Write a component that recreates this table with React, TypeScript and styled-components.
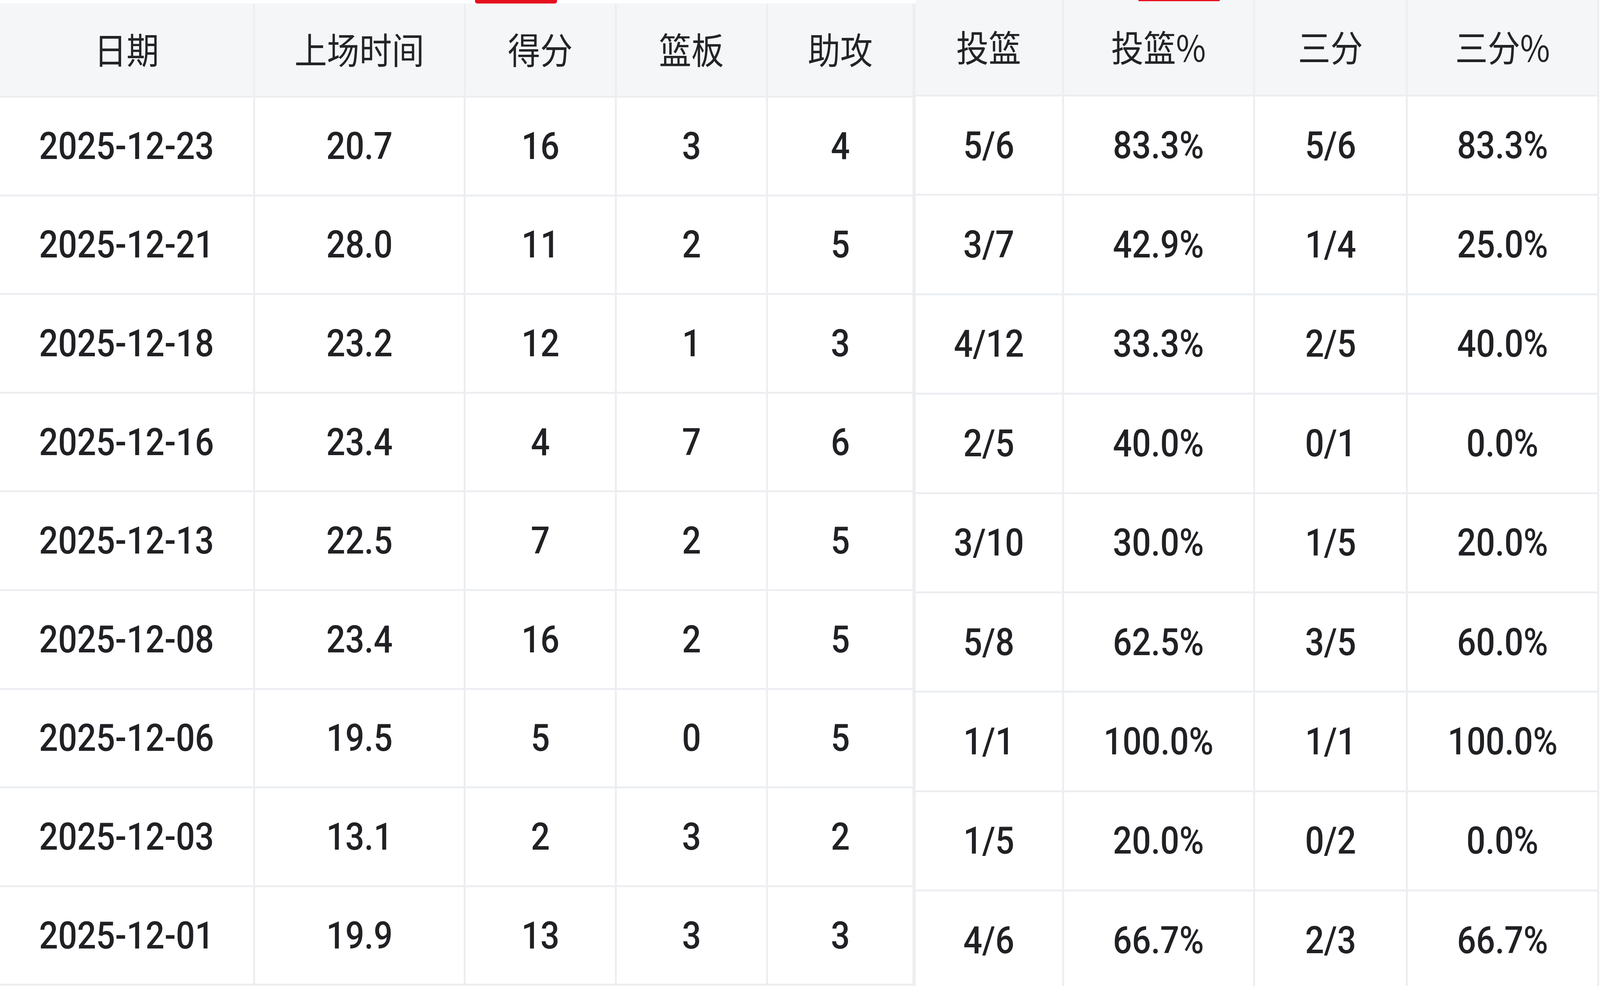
import React from "react";
import styled, { createGlobalStyle } from "styled-components";

const GlobalStyle = createGlobalStyle`
  html, body {
    margin: 0;
    padding: 0;
    background: #ffffff;
    width: 100%;
    height: 100%;
    overflow: hidden;
  }
  #root {
    width: 100%;
    height: 100%;
  }
  * { box-sizing: border-box; }
`;

const Page = styled.div`
  position: relative;
  display: flex;
  align-items: flex-start;
  width: 100vw;
  height: 2524px;
  overflow: hidden;
  background: #ffffff;
`;

const TableWrap = styled.div<{ $share: number; $top: number; $right: number }>`
  flex: ${(p) => p.$share} 1 0;
  min-width: 0;
  padding-top: ${(p) => p.$top}px;
  padding-right: ${(p) => p.$right}px;
  background: #ffffff;
`;

const Grid = styled.div<{ $cols: string; $head: number; $row: number; $rows: number; $edge: number; $foot: number }>`
  display: grid;
  grid-template-columns: ${(p) => p.$cols};
  grid-template-rows: ${(p) => p.$head}px repeat(${(p) => p.$rows}, ${(p) => p.$row}px);
  gap: 5px;
  padding-right: ${(p) => p.$edge}px;
  padding-bottom: ${(p) => p.$foot}px;
  background: #eceef1;
`;

const HeadCell = styled.div`
  display: flex;
  align-items: center;
  justify-content: center;
  padding-bottom: 8px;
  background: #f5f6f8;
  color: #232427;
  font-family: "Noto Sans CJK SC", "Noto Sans", sans-serif;
  font-weight: 400;
  font-size: 93px;
  white-space: nowrap;
  min-width: 0;
`;

const Cell = styled.div`
  display: flex;
  align-items: center;
  justify-content: center;
  background: #ffffff;
  color: #202124;
  font-family: Roboto, "Noto Sans", sans-serif;
  font-weight: 500;
  font-size: 96px;
  white-space: nowrap;
  min-width: 0;
`;

const Label = styled.span`
  display: inline-block;
  transform: scaleX(var(--sx, 1));
`;

const Indicator = styled.div<{ $left: number; $height: number }>`
  position: absolute;
  top: 0;
  left: ${(p) => (p.$left / 4590) * 100}vw;
  width: ${(235 / 4590) * 100}vw;
  height: ${(p) => p.$height}px;
  background: #e60f1e;
  border-radius: 0 0 6px 6px;
`;

const leftHead = ["日期", "上场时间", "得分", "篮板", "助攻"];
const rightHead = ["投篮", "投篮%", "三分", "三分%"];

const rows: string[][] = [
  ["2025-12-23", "20.7", "16", "3", "4", "5/6", "83.3%", "5/6", "83.3%"],
  ["2025-12-21", "28.0", "11", "2", "5", "3/7", "42.9%", "1/4", "25.0%"],
  ["2025-12-18", "23.2", "12", "1", "3", "4/12", "33.3%", "2/5", "40.0%"],
  ["2025-12-16", "23.4", "4", "7", "6", "2/5", "40.0%", "0/1", "0.0%"],
  ["2025-12-13", "22.5", "7", "2", "5", "3/10", "30.0%", "1/5", "20.0%"],
  ["2025-12-08", "23.4", "16", "2", "5", "5/8", "62.5%", "3/5", "60.0%"],
  ["2025-12-06", "19.5", "5", "0", "5", "1/1", "100.0%", "1/1", "100.0%"],
  ["2025-12-03", "13.1", "2", "3", "2", "1/5", "20.0%", "0/2", "0.0%"],
  ["2025-12-01", "19.9", "13", "3", "3", "4/6", "66.7%", "2/3", "66.7%"],
];

export default function App() {
  const vw = typeof window !== "undefined" ? window.innerWidth : 4590;
  const sx = Math.min(1, vw / 4590);
  return (
    <>
      <GlobalStyle />
      <Page style={{ ["--sx" as string]: sx } as React.CSSProperties}>
        <TableWrap $share={2628} $top={9} $right={0}>
          <Grid
            $cols="727fr 600fr 429fr 429fr 415fr"
            $head={236}
            $row={247.6}
            $rows={rows.length}
            $edge={8}
            $foot={5}
          >
            {leftHead.map((h) => (
              <HeadCell key={h}>
                <Label>{h}</Label>
              </HeadCell>
            ))}
            {rows.map((r) =>
              r.slice(0, 5).map((v, i) => (
                <Cell key={r[0] + "-l" + i}>
                  <Label>{v}</Label>
                </Cell>
              ))
            )}
          </Grid>
        </TableWrap>
        <TableWrap $share={1962} $top={0} $right={2}>
          <Grid
            $cols="420fr 543fr 433fr 544fr"
            $head={242}
            $row={249.4}
            $rows={rows.length}
            $edge={5}
            $foot={0}
          >
            {rightHead.map((h) => (
              <HeadCell key={h}>
                <Label>{h}</Label>
              </HeadCell>
            ))}
            {rows.map((r) =>
              r.slice(5).map((v, i) => (
                <Cell key={r[0] + "-r" + i}>
                  <Label>{v}</Label>
                </Cell>
              ))
            )}
          </Grid>
        </TableWrap>
        <Indicator $left={1363} $height={9} />
        <Indicator $left={3265} $height={3} />
      </Page>
    </>
  );
}
